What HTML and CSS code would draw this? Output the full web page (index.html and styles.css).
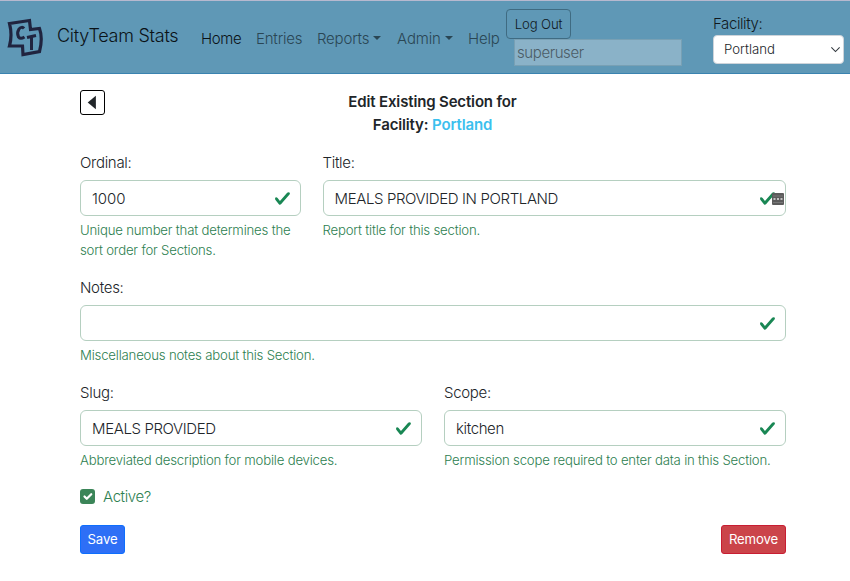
FILE: index.html
```html
<!DOCTYPE html>
<html lang="en">
<head>
<meta charset="utf-8">
<title>CityTeam Stats</title>
<link rel="stylesheet" href="styles.css">
</head>
<body>
<svg width="0" height="0" class="defs"><symbol id="check" viewBox="0 0 8 8"><path d="M2.3 6.73.6 4.53c-.4-1.04.46-1.4 1.1-.8l1.1 1.4 3.4-3.8c.6-.63 1.6-.27 1.2.7l-4 4.6c-.43.5-.8.4-1.1.1z"/></symbol></svg>
<header class="navbar">
  <svg class="logo" viewBox="0 0 36 40"><path class="frame" d="M2.500 5.500 22.500 2.500 23.500 11.500 32.500 10.500Q36 20 32.500 33.500L16 36.500 15.500 28 2.500 28Q5.500 17 2.500 5.500Z"/><path class="letter" d="M17 10.500Q15 8 12 11Q9.500 15 11.500 19Q13.500 21.500 17.500 19"/><path class="letter" d="M20 19.500 29 17.500M24.500 19V32"/></svg>
  <span class="brand">CityTeam Stats</span>
  <nav class="nav">
    <a class="active home">Home</a>
    <a class="entries">Entries</a>
    <a class="reports">Reports<i class="caret"></i></a>
    <a class="admin">Admin<i class="caret"></i></a>
    <a class="help">Help</a>
  </nav>
  <div class="session">
    <button class="logout">Log Out</button>
    <input class="user" value="superuser" disabled>
  </div>
  <div class="facility">
    <label>Facility:</label>
    <div class="select"><span>Portland</span><svg viewBox="0 0 16 16"><path d="m2 5 6 6 6-6"/></svg></div>
  </div>
</header>
<main>
  <div class="heading">
    <button class="back"><svg viewBox="0 0 24 24"><path d="M7 12 15.500 5V19Z"/></svg></button>
    <h1>Edit Existing Section for<br>Facility: <em>Portland</em></h1>
  </div>
  <div class="row first">
    <div class="field"><label>Ordinal:</label><div class="input"><span class="number">1000</span><svg class="check"><use href="#check"/></svg></div><p>Unique number that determines the<br>sort order for Sections.</p></div>
    <div class="field"><label>Title:</label><div class="input"><span>MEALS PROVIDED IN PORTLAND</span><svg class="check"><use href="#check"/></svg><svg class="key" viewBox="0 0 12 12"><rect width="12" height="12" rx="1"/><path d="M1 3h10M1 9.500h10" class="groove"/><path d="M1.500 6h2M5 6h2M8.500 6h2"/></svg></div><p>Report title for this section.</p></div>
  </div>
  <div class="row notes">
    <div class="field"><label>Notes:</label><div class="input"><svg class="check"><use href="#check"/></svg></div><p>Miscellaneous notes about this Section.</p></div>
  </div>
  <div class="row halves">
    <div class="field"><label>Slug:</label><div class="input"><span>MEALS PROVIDED</span><svg class="check"><use href="#check"/></svg></div><p>Abbreviated description for mobile devices.</p></div>
    <div class="field"><label>Scope:</label><div class="input"><span>kitchen</span><svg class="check"><use href="#check"/></svg></div><p>Permission scope required to enter data in this Section.</p></div>
  </div>
  <div class="active-row"><span class="box"><svg viewBox="0 0 20 20"><path d="m6 10 3 3 6-6"/></svg></span><span>Active?</span></div>
  <div class="actions"><button class="save">Save</button><button class="remove">Remove</button></div>
</main>
</body>
</html>
```
FILE: styles.css
```css
* { box-sizing: border-box; }
body { margin: 0; background: #fff; color: #212529; font: 350 15px/23px Inter, "Liberation Sans", sans-serif; letter-spacing: -.15px; }
.defs { position: absolute; }
button, input { font: inherit; letter-spacing: inherit; padding: 0; margin: 0; }
.navbar { height: 74px; display: flex; align-items: flex-start; background: #5f98b6; border-top: 1px solid #b7b9cf; border-bottom: 1px solid #3a83b0; padding-left: 7px; color: #10191e; }
.logo { width: 36px; height: 40px; margin-top: 17px; flex: none; fill: none; stroke: #20243f; }
.frame { stroke-width: 3.200; }
.letter { stroke-width: 3; }
.brand { width: 144px; padding-left: 14px; margin-top: 21px; font-size: 18px; line-height: 28px; letter-spacing: -.26px; white-space: nowrap; flex: none; color: #0b1216; }
.nav { width: 305px; padding-left: 14px; display: flex; margin-top: 26px; flex: none; color: #2a4654; white-space: nowrap; }
.nav .active { color: #0b1216; letter-spacing: -.4px; }
.nav a { flex: none; }
.home { width: 55px; }
.entries { width: 61px; letter-spacing: -.2px; }
.reports { width: 80px; letter-spacing: -.2px; }
.admin { width: 71px; }
.caret { display: inline-block; margin-left: 4px; vertical-align: 4px; border: 4.500px solid transparent; border-top-color: currentColor; border-bottom: 0; }
.session { width: 221px; flex: none; padding: 8px 0 0 14px; display: flex; flex-direction: column; align-items: flex-start; }
.logout { width: 65px; height: 30px; flex: none; border: 1px solid #3f6b82; border-radius: 4px; background: transparent; font-size: 13.200px; color: #10191e; }
.user { width: 168px; height: 27px; flex: none; margin-left: 8px; padding: 0 2px; background: #8ab2c8; border: 1px solid #78a0b4; color: #4b5c66; letter-spacing: -.4px; }
.facility { padding-top: 12px; width: 131px; flex: none; }
.facility label { display: block; line-height: 22px; letter-spacing: -.4px; }
.select { width: 131px; height: 29px; border: 1px solid #ced4da; border-radius: 4px; background: #fff; display: flex; align-items: center; justify-content: space-between; padding: 0 2px 0 10px; font-size: 13.200px; letter-spacing: 0; color: #212529; }
.select svg { width: 11px; height: 11px; fill: none; stroke: #343a40; stroke-width: 1.600; }
main { width: 706px; margin-left: 80px; padding-top: 16px; }
.heading { display: grid; grid-template-columns: 220px 265px 221px; }
.back { width: 25px; height: 25px; border: 1.500px solid #000; border-radius: 3px; background: #fff; }
.back svg { display: block; width: 23px; height: 23px; fill: #212529; }
h1 { margin: 0; font-size: 15px; line-height: 23px; text-align: center; font-weight: 600; }
h1 em { color: #3bc0ee; font-style: normal; }
.row { display: grid; column-gap: 22px; }
.first { grid-template-columns: 220.500px 1fr; margin-top: 15px; height: 125px; }
.notes { height: 105px; }
.halves { grid-template-columns: 1fr 1fr; height: 104px; }
.field label { display: block; height: 29px; line-height: 23px; letter-spacing: -.3px; }
.input { height: 36px; margin-bottom: 4px; border: 1px solid #b5cfc0; border-radius: 6px; display: flex; align-items: center; padding: 1px 9px 0 11px; letter-spacing: -.38px; position: relative; }
.number { letter-spacing: -.05px; }
.check { width: 17px; height: 17px; margin-left: auto; fill: #198754; }
.key { position: absolute; right: 1px; top: 12px; width: 12px; height: 12px; fill: #5b5b5b; stroke: #e4e4e4; stroke-width: 1.500; }
.key rect { stroke: none; }
.key .groove { stroke: #777; stroke-width: 1; }
p { margin: 4px 0 0; font-size: 13.200px; line-height: 20px; letter-spacing: -.2px; color: #2d8050; white-space: nowrap; }
.active-row { height: 23px; display: flex; align-items: center; gap: 8px; color: #2d8050; letter-spacing: -.4px; }
.box { width: 15px; height: 15px; background: #3b8558; border-radius: 3px; }
.box svg { display: block; width: 15px; height: 15px; fill: none; stroke: #fff; stroke-width: 3; stroke-linecap: round; stroke-linejoin: round; }
.actions { display: flex; justify-content: space-between; margin-top: 17px; }
.actions button { height: 29px; border-radius: 3px; color: #fff; font-size: 13.200px; font-weight: 400; }
.save { width: 45px; background: #2e6ff6; border: 1px solid #0d6efd; }
.remove { width: 65px; background: #cb444a; border: 1px solid #c81d32; }
```
